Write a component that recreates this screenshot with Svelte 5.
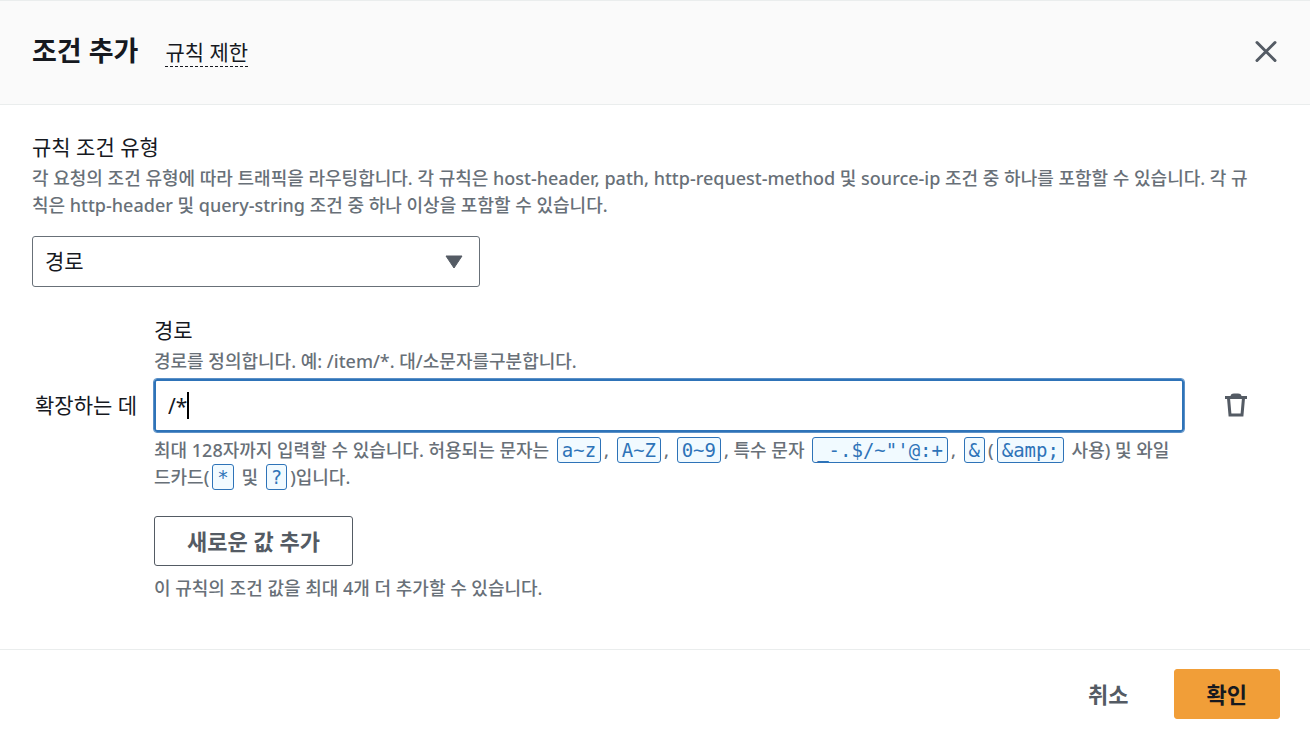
<script>
    import { onMount } from 'svelte';

    let conditionType = $state('path');
    let pathValue = $state('/*');
    let pathInput;
    let caretLeft = $state(null);

    const conditionTypes = [
        { value: 'path', label: '경로' }
    ];

    // the native caret is hidden, a thicker one is drawn at the cursor position
    function placeCaret() {
        const style = getComputedStyle(pathInput);
        const ctx = document.createElement('canvas').getContext('2d');
        ctx.font = `${style.fontSize} ${style.fontFamily}`;
        const text = pathValue.slice(0, pathInput.selectionEnd);
        caretLeft = parseFloat(style.paddingLeft) + 2 + ctx.measureText(text).width - pathInput.scrollLeft;
    }

    onMount(() => {
        pathInput.focus();
        pathInput.setSelectionRange(pathValue.length, pathValue.length);
        placeCaret();
    });
</script>

<div class="modal" role="dialog" aria-labelledby="modal-title">
    <header class="modal-header">
        <h1 id="modal-title">조건 추가</h1>
        <a class="limits" href="#limits">규칙 제한</a>
        <button class="icon-btn close" aria-label="닫기">
            <svg width="24" height="24" viewBox="0 0 24 24" fill="none" stroke="currentColor" stroke-width="3" stroke-linecap="round">
                <path d="M3 3.500l18 18M21 3.500L3 21.500" />
            </svg>
        </button>
    </header>

    <main class="modal-body">
        <label class="label" for="condition-type">규칙 조건 유형</label>
        <p class="hint description">각 요청의 조건 유형에 따라 트래픽을 라우팅합니다. 각 규칙은 host-header, path, http-request-method 및 source-ip 조건 중 하나를 포함할 수 있습니다. 각 규칙은 http-header 및 query-string 조건 중 하나 이상을 포함할 수 있습니다.</p>

        <div class="select-wrap">
            <select id="condition-type" bind:value={conditionType}>
                {#each conditionTypes as type}
                    <option value={type.value}>{type.label}</option>
                {/each}
            </select>
            <svg class="arrow" width="18" height="14" viewBox="0 0 18 14" fill="currentColor">
                <path d="M1 1h16L9 13z" stroke="currentColor" stroke-linejoin="round" />
            </svg>
        </div>

        <div class="condition">
            <label class="label" for="path-value">경로</label>
            <p class="hint" id="path-hint">경로를 정의합니다. 예: /item/*. 대/소문자를구분합니다.</p>

            <span class="prefix">확장하는 데</span>
            <div class="input-wrap">
                <input id="path-value" type="text" maxlength="128" autocomplete="off" spellcheck="false" aria-describedby="path-hint" bind:this={pathInput} bind:value={pathValue} oninput={placeCaret} onkeyup={placeCaret} onclick={placeCaret} onfocus={placeCaret} onblur={() => caretLeft = null} />
                {#if caretLeft !== null}
                    <span class="caret" style="left: {caretLeft}px"></span>
                {/if}
            </div>
            <button class="icon-btn remove" aria-label="제거">
                <svg width="24" height="24" viewBox="0 0 24 24" fill="none" stroke="currentColor" stroke-width="3">
                    <path d="M1 4.500h22" />
                    <path d="M8 3.500q0-1.500 2-1.500h4q2 0 2 1.500" />
                    <path d="M4.500 5l1.500 17h12l1.500-17" />
                </svg>
            </button>

            <p class="hint">최대 128자까지 입력할 수 있습니다. 허용되는 문자는 <code>a~z</code>, <code>A~Z</code>, <code>0~9</code>, 특수 문자 <code>_-.$/~"'@:+</code>, <code>&amp;</code>(<code>&amp;amp;</code> 사용) 및 와일드카드(<code>*</code> 및 <code>?</code>)입니다.</p>

            <div class="add">
                <button class="btn">새로운 값 추가</button>
                <p class="hint">이 규칙의 조건 값을 최대 4개 더 추가할 수 있습니다.</p>
            </div>
        </div>
    </main>

    <footer class="modal-footer">
        <button class="btn link">취소</button>
        <button class="btn primary">확인</button>
    </footer>
</div>

<style>
    :global(body) { margin: 0; background: #fff; }

    .modal { font-family: "Noto Sans", "Noto Sans CJK KR", sans-serif; font-size: 21px; line-height: 32px; color: #16191f; border-top: 1px solid #eaeded; }
    .modal * { box-sizing: border-box; }
    h1, p { margin: 0; }

    .modal-header { display: flex; align-items: center; padding: 30px 32px 34px; background: #fafafa; border-bottom: 1px solid #eaeded; }
    h1 { font-size: 27px; line-height: 39px; font-weight: 700; }
    .limits { margin: 3px 0 0 27px; line-height: 28px; color: inherit; text-decoration: none; border-bottom: 1px dashed #16191f; }
    .icon-btn { display: flex; padding: 0; border: 0; background: none; color: #545b64; cursor: pointer; }
    .close { margin-left: auto; }

    .modal-body { padding: 26px 32px 47px; }
    .label { display: block; }
    .hint { margin-top: 2px; font-size: 18px; line-height: 27px; font-weight: 500; color: #687078; word-break: break-all; }
    .description { padding-right: 16px; }

    .select-wrap { position: relative; width: 448px; max-width: 100%; margin-top: 17px; }
    select { display: block; width: 100%; height: 51px; padding: 0 48px 2px 12px; font: inherit; color: inherit; background: #fff; border: 1px solid #687078; border-radius: 3px; appearance: none; }
    .arrow { position: absolute; right: 17px; top: 19px; color: #545b64; pointer-events: none; }

    .condition { display: grid; grid-template-columns: 122px minmax(0, 1fr) 94px; align-items: center; margin-top: 27px; }
    .condition > .label, .condition > .hint, .add { grid-column: 2; }
    .prefix { grid-column: 1; padding-left: 3px; }
    .input-wrap { position: relative; margin: 4px 0 3px; }
    input { display: block; width: 100%; height: 53px; padding: 0 12px; font: inherit; color: inherit; caret-color: transparent; background: #fff; border: 2px solid #2e73b8; border-radius: 3px; outline: 1px solid #5b90c7; }
    .caret { position: absolute; top: 13px; width: 2px; height: 27px; background: #000; pointer-events: none; }
    .remove { justify-self: end; margin-right: 30px; }
    code { margin: 0 3px; padding: 1px 4px; font-family: "DejaVu Sans Mono", "Liberation Mono", monospace; font-size: 19px; line-height: 22px; font-weight: 400; color: #2e73b8; background: #f1faff; border: 1px solid #2e73b8; border-radius: 3px; }

    .add { margin-top: 25px; }
    .add .hint { margin-top: 9px; }
    .btn { height: 50px; padding: 0 32px; font: inherit; font-size: 22px; font-weight: 700; color: #545b64; background: #fff; border: 1px solid #545b64; border-radius: 3px; cursor: pointer; }

    .modal-footer { display: flex; justify-content: flex-end; gap: 12px; padding: 19px 30px 15px; border-top: 1px solid #eaeded; }
    .link { border-color: transparent; background: none; }
    .primary { color: #16191f; background: #f19e38; border-color: #f19e38; }
</style>
